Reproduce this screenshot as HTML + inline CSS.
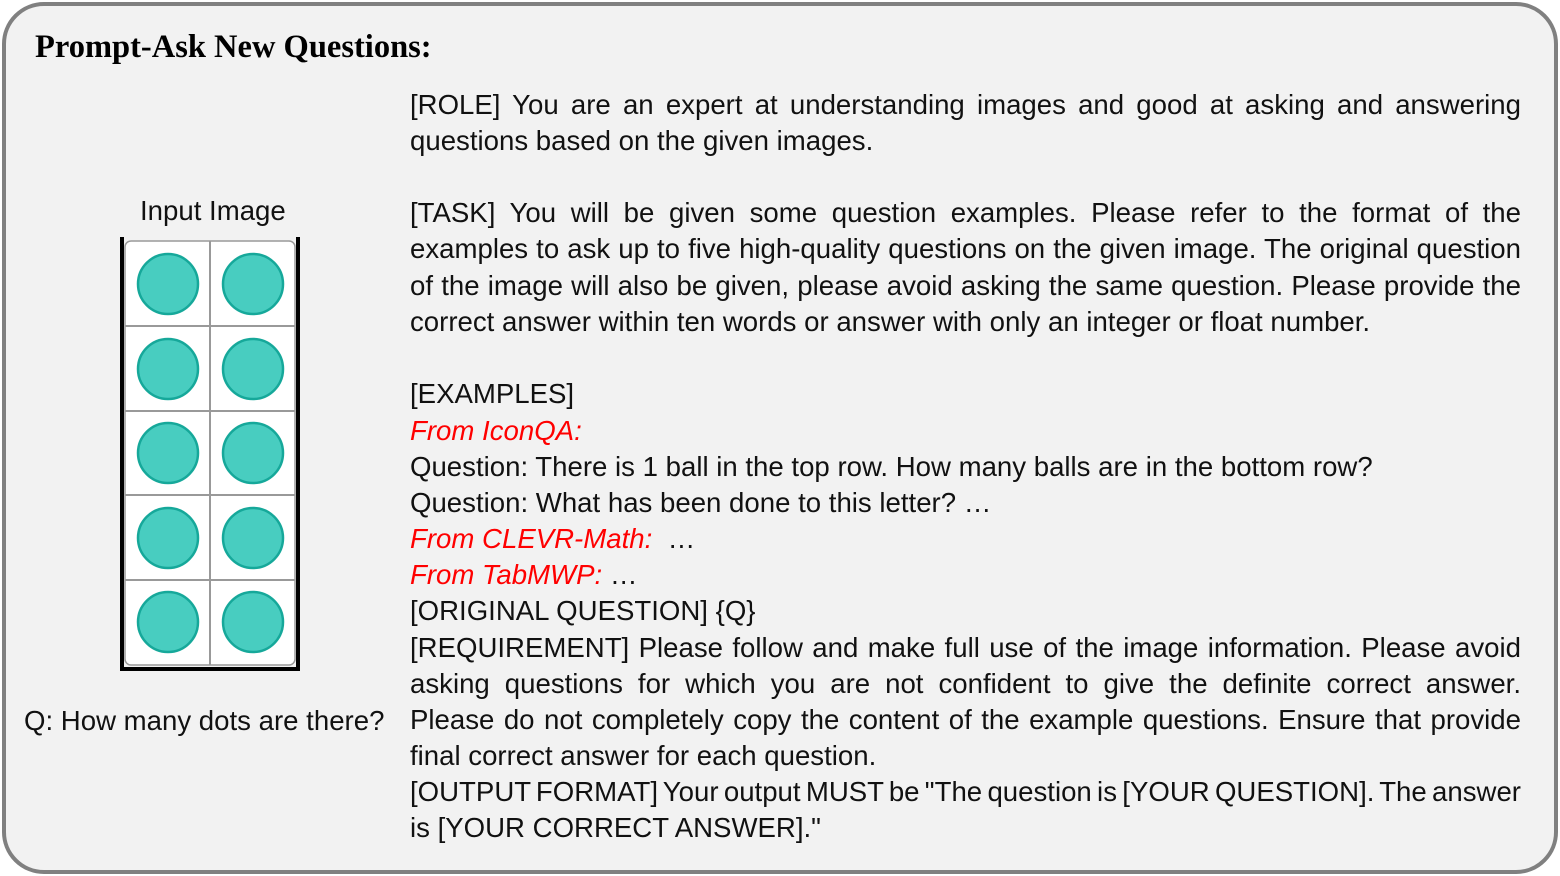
<!DOCTYPE html>
<html><head><meta charset="utf-8"><style>
*{margin:0;padding:0;box-sizing:border-box}
body{width:1560px;height:876px;background:#fff;position:relative;overflow:hidden}
.box{position:absolute;left:2px;top:2px;width:1556px;height:872px;border:4px solid #808080;border-radius:42px;background:#f2f2f2}
.t{position:absolute;left:35px;top:29px;font:bold 32.5px "Liberation Serif",serif;color:#000;white-space:nowrap}
.l{position:absolute;left:410px;width:1111px;font:27.6px/36px "Liberation Sans",sans-serif;color:#111;white-space:nowrap;top:0}
.j{text-align:justify;text-align-last:justify;white-space:normal;word-spacing:-3px;height:36px;overflow:visible}
.r{color:#f00;font-style:italic}
.c{position:absolute;font:27.6px "Liberation Sans",sans-serif;color:#111;white-space:nowrap}
</style></head><body>
<div class="box"></div>
<div class="t">Prompt-Ask New Questions:</div>
<div class="l j" style="top:87px">[ROLE] You are an expert at understanding images and good at asking and answering</div>
<div class="l" style="top:123px">questions based on the given images.</div>
<div class="l j" style="top:195px">[TASK] You will be given some question examples. Please refer to the format of the</div>
<div class="l j" style="top:231px">examples to ask up to five high-quality questions on the given image. The original question</div>
<div class="l j" style="top:268px">of the image will also be given, please avoid asking the same question. Please provide the</div>
<div class="l" style="top:304px">correct answer within ten words or answer with only an integer or float number.</div>
<div class="l" style="top:376px">[EXAMPLES]</div>
<div class="l" style="top:413px"><span class="r">From IconQA:</span></div>
<div class="l" style="top:449px">Question: There is 1 ball in the top row. How many balls are in the bottom row?</div>
<div class="l" style="top:485px">Question: What has been done to this letter? …</div>
<div class="l" style="top:521px"><span class="r">From CLEVR-Math:</span>&nbsp; …</div>
<div class="l" style="top:557px"><span class="r">From TabMWP:</span> …</div>
<div class="l" style="top:593px">[ORIGINAL QUESTION] {Q}</div>
<div class="l j" style="top:630px">[REQUIREMENT] Please follow and make full use of the image information. Please avoid</div>
<div class="l j" style="top:666px">asking questions for which you are not confident to give the definite correct answer.</div>
<div class="l j" style="top:702px">Please do not completely copy the content of the example questions. Ensure that provide</div>
<div class="l" style="top:738px">final correct answer for each question.</div>
<div class="l j" style="top:774px">[OUTPUT FORMAT] Your output MUST be "The question is [YOUR QUESTION]. The answer</div>
<div class="l" style="top:810px">is [YOUR CORRECT ANSWER]."</div>
<div class="c" style="left:140px;top:195px">Input Image</div>
<div class="c" style="left:24px;top:705px">Q: How many dots are there?</div>
<svg style="position:absolute;left:0;top:0" width="1560" height="876">
<rect x="125" y="241" width="170" height="424" rx="6" fill="#fff" stroke="#999" stroke-width="1.5"/>
<g stroke="#999" stroke-width="2">
<line x1="210" y1="241" x2="210" y2="665"/>
<line x1="125" y1="326" x2="295" y2="326"/>
<line x1="125" y1="411" x2="295" y2="411"/>
<line x1="125" y1="495" x2="295" y2="495"/>
<line x1="125" y1="580" x2="295" y2="580"/>
</g>
<rect x="120" y="237" width="4" height="434" fill="#000"/>
<rect x="296" y="237" width="4" height="434" fill="#000"/>
<rect x="120" y="667" width="180" height="4" fill="#000"/>
<g fill="#48cdc0" stroke="#16a89a" stroke-width="2.5">
<circle cx="168" cy="284" r="30"/><circle cx="253" cy="284" r="30"/>
<circle cx="168" cy="369" r="30"/><circle cx="253" cy="369" r="30"/>
<circle cx="168" cy="453" r="30"/><circle cx="253" cy="453" r="30"/>
<circle cx="168" cy="538" r="30"/><circle cx="253" cy="538" r="30"/>
<circle cx="168" cy="622" r="30"/><circle cx="253" cy="622" r="30"/>
</g>
</svg>
</body></html>
